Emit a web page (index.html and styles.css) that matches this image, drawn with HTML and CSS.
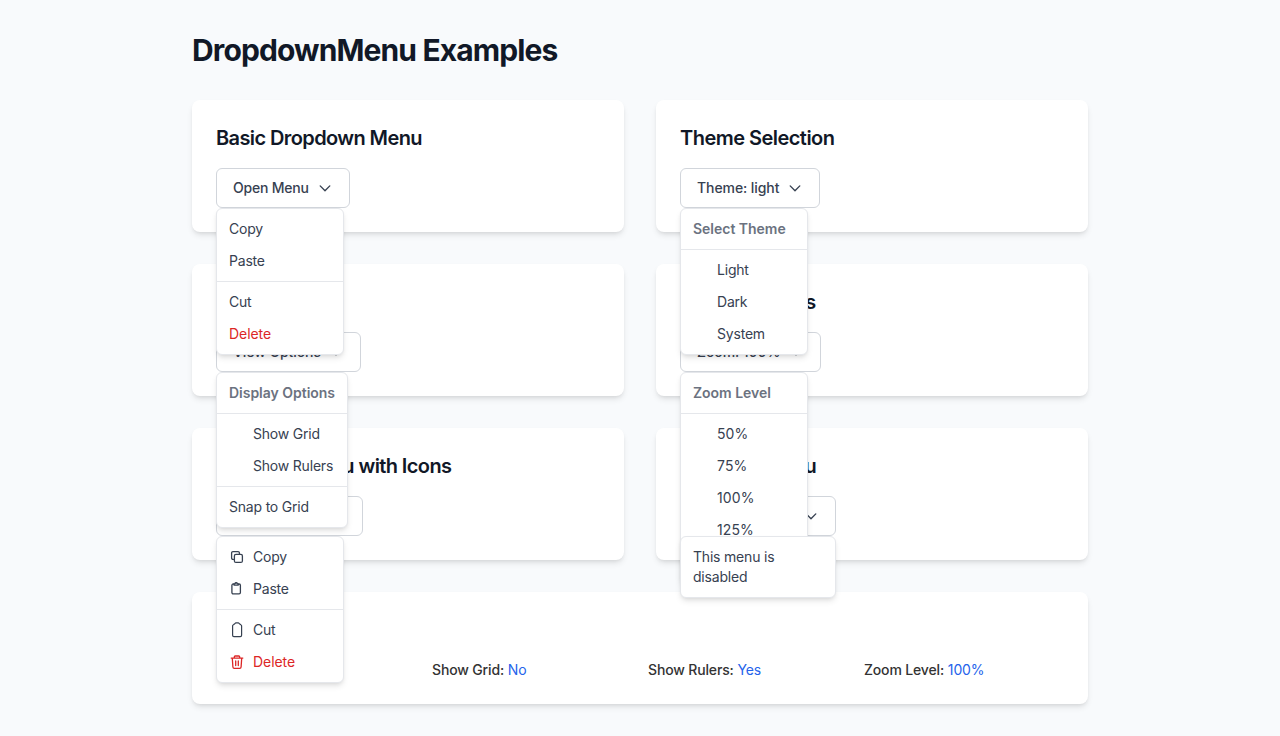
FILE: index.html
```html
<!DOCTYPE html>
<html lang="en">
<head>
<meta charset="utf-8">
<title>DropdownMenu Examples</title>
<link rel="stylesheet" href="styles.css">
</head>
<body>
<svg class="defs" width="0" height="0">
  <symbol id="chevron" viewBox="0 0 16 16"><path d="M3.2 5.9 8 10.8l4.8-4.9" fill="none" stroke="currentColor" stroke-width="1.35" stroke-linecap="round" stroke-linejoin="round"/></symbol>
</svg>
<main class="page">
  <h1 class="page-title">DropdownMenu Examples</h1>
  <div class="cards">
    <section class="card">
      <h2 class="card-title">Basic Dropdown Menu</h2>
      <div class="dropdown">
        <button class="trigger trigger-open">Open Menu<svg class="chevron"><use href="#chevron"/></svg></button>
        <div class="menu">
          <div class="item">Copy</div>
          <div class="item">Paste</div>
          <div class="separator"></div>
          <div class="item">Cut</div>
          <div class="item danger">Delete</div>
        </div>
      </div>
    </section>
    <section class="card">
      <h2 class="card-title title-loose">Theme Selection</h2>
      <div class="dropdown">
        <button class="trigger trigger-theme">Theme: light<svg class="chevron"><use href="#chevron"/></svg></button>
        <div class="menu">
          <div class="label">Select Theme</div>
          <div class="separator"></div>
          <div class="item inset">Light</div>
          <div class="item inset">Dark</div>
          <div class="item inset">System</div>
        </div>
      </div>
    </section>
    <section class="card">
      <h2 class="card-title">View Options</h2>
      <div class="dropdown">
        <button class="trigger trigger-view">View Options<svg class="chevron"><use href="#chevron"/></svg></button>
        <div class="menu menu-view">
          <div class="label">Display Options</div>
          <div class="separator"></div>
          <div class="item inset">Show Grid</div>
          <div class="item inset">Show Rulers</div>
          <div class="separator"></div>
          <div class="item">Snap to Grid</div>
        </div>
      </div>
    </section>
    <section class="card">
      <h2 class="card-title title-loose">Zoom Controls</h2>
      <div class="dropdown">
        <button class="trigger trigger-zoom">Zoom: 100%<svg class="chevron"><use href="#chevron"/></svg></button>
        <div class="menu">
          <div class="label">Zoom Level</div>
          <div class="separator"></div>
          <div class="item inset number">50%</div>
          <div class="item inset number">75%</div>
          <div class="item inset number">100%</div>
          <div class="item inset number">125%</div>
          <div class="item inset number">150%</div>
        </div>
      </div>
    </section>
    <section class="card">
      <h2 class="card-title">Complex Menu with Icons</h2>
      <div class="dropdown">
        <button class="trigger trigger-complex">Edit Actions<svg class="chevron"><use href="#chevron"/></svg></button>
        <div class="menu">
          <div class="item"><svg class="icon" viewBox="0 0 16 16"><path d="M4.4 10.4H3.9a1.3 1.3 0 0 1-1.3-1.3V3.9a1.3 1.3 0 0 1 1.3-1.3h5.2a1.3 1.3 0 0 1 1.3 1.3v.5"/><rect x="5.4" y="5.4" width="8" height="8" rx="1.5"/></svg>Copy</div>
          <div class="item"><svg class="icon" viewBox="0 0 16 16"><path d="M4.8 3H4.2A1.3 1.3 0 0 0 2.9 4.3v7.2a1.3 1.3 0 0 0 1.3 1.3h5.9a1.3 1.3 0 0 0 1.3-1.3V4.3A1.3 1.3 0 0 0 10.1 3h-.6"/><path d="M5 4.1V3l.9-.3a1.3 1.3 0 0 1 2.5 0l.9.3v1.1z"/></svg>Paste</div>
          <div class="separator"></div>
          <div class="item"><svg class="icon icon-tall" viewBox="0 0 16 16"><path d="M6.2 1.3C5.9 2 5 2.4 4.4 2.7c-.5.2-.8.6-.8 1.1v9.5c0 .8.5 1.4 1.3 1.4h6.4c.8 0 1.3-.6 1.3-1.4V3.8c0-.5-.3-.9-.8-1.1-.6-.3-1.5-.7-1.8-1.4-.2-.3-.4-.4-.7-.4H6.9c-.3 0-.5.1-.7.4z"/></svg>Cut</div>
          <div class="item danger"><svg class="icon" viewBox="0 0 16 16"><path d="M2.2 4.1h11.6M5.3 4V2.9c0-.6.3-.9.9-.9h3.6c.6 0 .9.3.9.9V4M3.3 4.3l.6 8.7c.1.9.5 1.3 1.3 1.3h5.6c.8 0 1.2-.4 1.3-1.3l.6-8.7M6.7 7v4.5M9.3 7v4.5"/></svg>Delete</div>
        </div>
      </div>
    </section>
    <section class="card">
      <h2 class="card-title">Disabled Menu</h2>
      <div class="dropdown">
        <button class="trigger trigger-disabled">Disabled Menu<svg class="chevron"><use href="#chevron"/></svg></button>
        <div class="menu menu-fill">
          <div class="item">This menu is disabled</div>
        </div>
      </div>
    </section>
  </div>
  <section class="card state">
    <h2 class="card-title">Current State</h2>
    <div class="state-grid">
      <div><span class="key">Theme:</span> <span class="value">light</span></div>
      <div><span class="key">Show Grid:</span> <span class="value">No</span></div>
      <div><span class="key">Show Rulers:</span> <span class="value">Yes</span></div>
      <div><span class="key">Zoom Level:</span> <span class="value">100%</span></div>
    </div>
  </section>
</main>
</body>
</html>
```
FILE: styles.css
```css
* { box-sizing: border-box; }
body {
  margin: 0;
  height: 736px;
  overflow: hidden;
  background: #f8fafc;
  color: #213547;
  font-family: Inter, "Liberation Sans", sans-serif;
  font-size: 14px;
  line-height: 20px;
}
.defs { position: absolute; }
.page { width: 896px; margin: 0 auto; padding-top: 32px; }
.page-title {
  margin: 0 0 32px;
  font-size: 30px;
  line-height: 36px;
  font-weight: 700;
  letter-spacing: -0.88px;
  color: #111827;
}
.cards { display: grid; grid-template-columns: 1fr 1fr; gap: 32px; }
.card {
  padding: 24px;
  background: #fff;
  border-radius: 8px;
  box-shadow: 0 4px 6px -1px rgba(0,0,0,.1), 0 2px 4px -2px rgba(0,0,0,.1);
}
.card-title {
  margin: 0 0 16px;
  font-size: 20px;
  line-height: 28px;
  font-weight: 600;
  letter-spacing: -0.6px;
  color: #111827;
}
.title-loose { letter-spacing: -0.53px; }
.dropdown { position: relative; width: fit-content; }
.trigger {
  display: flex;
  align-items: center;
  justify-content: space-between;
  height: 40px;
  padding: 0 16px;
  border: 1px solid #d1d5db;
  border-radius: 6px;
  background: #fff;
  color: #374151;
  font: 500 14px/20px Inter, "Liberation Sans", sans-serif;
  letter-spacing: -0.08px;
  white-space: nowrap;
}
.trigger-open { width: 134px; letter-spacing: -0.2px; }
.trigger-theme { width: 140px; }
.trigger-view { width: 145px; }
.trigger-zoom { width: 141px; }
.trigger-complex { width: 147px; }
.trigger-disabled { width: 156px; }
.chevron { width: 16px; height: 16px; flex: none; }
.menu {
  position: absolute;
  z-index: 50;
  top: 100%;
  left: 0;
  width: 128px;
  padding: 4px;
  border: 1px solid #e5e7eb;
  border-radius: 6px;
  background: #fff;
  color: #374151;
  box-shadow: 0 4px 6px -1px rgba(0,0,0,.1), 0 2px 4px -2px rgba(0,0,0,.1);
}
.menu-view { width: 132px; }
.menu-fill { width: 100%; }
.item, .label { display: flex; align-items: center; padding: 6px 8px; }
.item { letter-spacing: -0.2px; }
.inset { padding-left: 32px; white-space: nowrap; }
.number { letter-spacing: 0.1px; }
.label { font-weight: 600; letter-spacing: -0.02px; color: #6b7280; white-space: nowrap; }
.danger { letter-spacing: -0.05px; color: #dc2626; }
.separator { height: 1px; margin: 4px -4px; background: #e5e7eb; }
.icon {
  width: 16px;
  height: 16px;
  margin-right: 8px;
  fill: none;
  stroke: currentColor;
  stroke-width: 1.3;
  stroke-linecap: round;
  stroke-linejoin: round;
}
.icon-tall { stroke-width: 1.2; }
.state { margin-top: 32px; }
.state-grid {
  display: grid;
  grid-template-columns: repeat(4, 1fr);
  gap: 16px;
  letter-spacing: -0.15px;
}
.key { font-weight: 500; color: #333; }
.value { color: #2563eb; }
```
